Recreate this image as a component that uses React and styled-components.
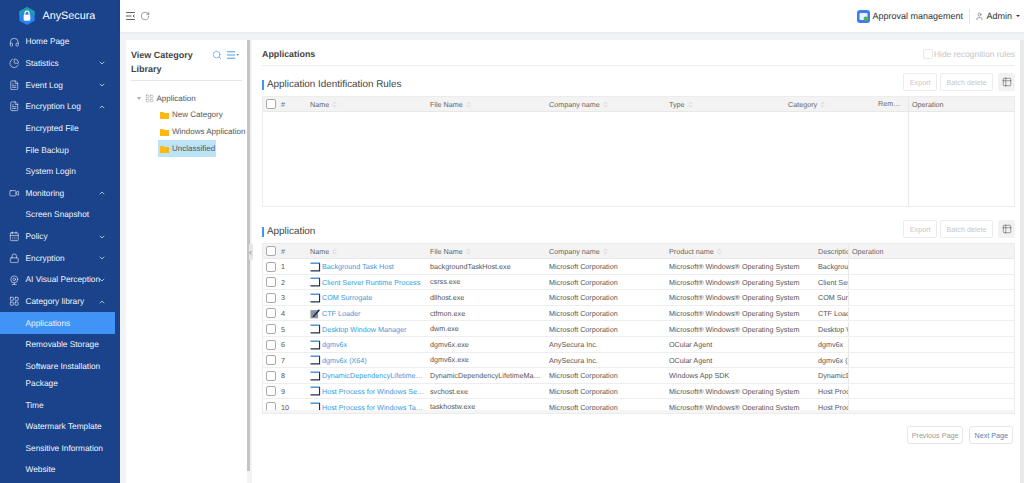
import React from 'react'
import styled, { createGlobalStyle } from 'styled-components'
import {
  Headphones, ChartPie, FileText, Video, CalendarDays, Lock, Webcam, LayoutGrid,
  ChevronDown, ChevronUp, Search, RotateCw, User, Table2, ChevronsUpDown,
} from 'lucide-react'

const MENU = [
  { label: 'Home Page', Icon: Headphones },
  { label: 'Statistics', Icon: ChartPie, arrow: 'down' },
  { label: 'Event Log', Icon: FileText, arrow: 'down' },
  { label: 'Encryption Log', Icon: FileText, arrow: 'up' },
  { label: 'Encrypted File', sub: true },
  { label: 'File Backup', sub: true },
  { label: 'System Login', sub: true },
  { label: 'Monitoring', Icon: Video, arrow: 'up' },
  { label: 'Screen Snapshot', sub: true },
  { label: 'Policy', Icon: CalendarDays, arrow: 'down' },
  { label: 'Encryption', Icon: Lock, arrow: 'down' },
  { label: 'AI Visual Perception', Icon: Webcam, arrow: 'down' },
  { label: 'Category library', Icon: LayoutGrid, arrow: 'up' },
  { label: 'Applications', sub: true, active: true },
  { label: 'Removable Storage', sub: true },
  { label: 'Software Installation Package', sub: true },
  { label: 'Time', sub: true },
  { label: 'Watermark Template', sub: true },
  { label: 'Sensitive Information', sub: true },
  { label: 'Website', sub: true },
]

const OS = 'Microsoft® Windows® Operating System'
const MS = 'Microsoft Corporation'

const APPS = [
  ['Background Task Host', 'backgroundTaskHost.exe', MS, OS, 'Background Task Host'],
  ['Client Server Runtime Process', 'csrss.exe', MS, OS, 'Client Server Runtime'],
  ['COM Surrogate', 'dllhost.exe', MS, OS, 'COM Surrogate'],
  ['CTF Loader', 'ctfmon.exe', MS, OS, 'CTF Loader'],
  ['Desktop Window Manager', 'dwm.exe', MS, OS, 'Desktop Window'],
  ['dgmv6x', 'dgmv6x.exe', 'AnySecura Inc.', 'OCular Agent', 'dgmv6x'],
  ['dgmv6x (X64)', 'dgmv6x.exe', 'AnySecura Inc.', 'OCular Agent', 'dgmv6x (X64)'],
  ['DynamicDependencyLifetimeManager', 'DynamicDependencyLifetimeManager.exe', MS, 'Windows App SDK', 'DynamicDependency'],
  ['Host Process for Windows Services', 'svchost.exe', MS, OS, 'Host Process'],
  ['Host Process for Windows Tasks', 'taskhostw.exe', MS, OS, 'Host Process'],
]

const RULE_COLS = '14px 29px 120px 119px 120px 119px 90px 34px 1fr'
const APP_COLS = '14px 29px 120px 119px 120px 149px 34px 1fr'

function Logo() {
  return (
    <svg width="18" height="18" viewBox="0 0 19 20">
      <path d="M9.5 0 18 4.8v10.4L9.5 20 1 15.2V4.8z" fill="#2a83ee" />
      <path d="M9.5 0 18 4.8v5L9.5 5 1 9.8v-5z" fill="#1fa39b" opacity=".75" />
      <rect x="5.8" y="8.6" width="7.4" height="6.6" rx="1.2" fill="#fff" />
      <path d="M7.2 9V6.9a2.3 2.3 0 0 1 4.6 0V9" fill="none" stroke="#fff" strokeWidth="1.3" />
    </svg>
  )
}

function Folder() {
  return (
    <FixedSvg width="9" height="8" viewBox="0 0 9 8">
      <path d="M0 1h3.4l.8.9H9V8H0z" fill="#fdb813" />
    </FixedSvg>
  )
}

function AppIcon({ pen }) {
  if (pen) {
    return (
      <FixedSvg width="10.5" height="11" viewBox="0 0 11 11">
        <rect x="0.5" y="2" width="8" height="8.5" fill="#8d939b" />
        <path d="M3 8 9.2 1l1.3 1.2L4.3 9.2 2.6 9.7z" fill="#1c2f63" />
      </FixedSvg>
    )
  }
  return (
    <FixedSvg width="10.5" height="10" viewBox="0 0 11 10">
      <path d="M0.5 1h10" stroke="#2f7fc4" strokeWidth="1.3" />
      <path d="M10 1v8H0.5" fill="none" stroke="#23304a" strokeWidth="1.2" />
    </FixedSvg>
  )
}

function Sort() {
  return <SortIcon size={7} strokeWidth={1.5} />
}

function RulesTable() {
  const heads = ['File Name', 'Company name', 'Type', 'Category']
  return (
    <Table>
      <HeadRow $cols={RULE_COLS}>
        <CheckCell><Check /></CheckCell>
        <Cell>#</Cell>
        <Cell>Name <Sort /></Cell>
        {heads.map(text => <Cell key={text}>{text} <Sort /></Cell>)}
        <RemarkCell>Remarks</RemarkCell>
        <OperationCell>Operation</OperationCell>
      </HeadRow>
      <EmptyBody $cols={RULE_COLS}>
        <OperationCell />
      </EmptyBody>
    </Table>
  )
}

function AppsTable() {
  return (
    <Table>
      <HeadRow $cols={APP_COLS}>
        <CheckCell><Check /></CheckCell>
        <Cell>#</Cell>
        <Cell>Name <Sort /></Cell>
        <Cell>File Name <Sort /></Cell>
        <Cell>Company name <Sort /></Cell>
        <Cell>Product name <Sort /></Cell>
        <Cell>Description</Cell>
        <OperationCell>Operation</OperationCell>
      </HeadRow>
      <Rows>
        {APPS.map(([name, file, company, product, description], index) => (
          <BodyRow key={name} $cols={APP_COLS}>
            <CheckCell><Check /></CheckCell>
            <Cell>{index + 1}</Cell>
            <NameCell>
              <AppIcon pen={name === 'CTF Loader'} />
              <AppLink>{name}</AppLink>
            </NameCell>
            <FileCell>{file}</FileCell>
            <Cell>{company}</Cell>
            <Cell>{product}</Cell>
            <Cell>{description}</Cell>
            <OperationCell />
          </BodyRow>
        ))}
      </Rows>
      <ScrollStrip />
    </Table>
  )
}

function Toolbar() {
  return (
    <Tools>
      <GhostButton>Export</GhostButton>
      <GhostButton>Batch delete</GhostButton>
      <ColumnsButton><Table2 size={10} strokeWidth={1.2} /></ColumnsButton>
    </Tools>
  )
}

export default function App() {
  return (
    <Page>
      <Global />
      <Sidebar>
        <Brand><Logo /><BrandName>AnySecura</BrandName></Brand>
        {MENU.map(({ label, Icon, arrow, sub, active }) => (
          <MenuItem key={label} $sub={sub} $active={active}>
            {Icon && <MenuIcon><Icon size={10.5} strokeWidth={1.4} /></MenuIcon>}
            <MenuLabel $sub={sub}>{label}</MenuLabel>
            {arrow === 'down' && <MenuArrow><ChevronDown size={8} strokeWidth={2} /></MenuArrow>}
            {arrow === 'up' && <MenuArrow><ChevronUp size={8} strokeWidth={2} /></MenuArrow>}
          </MenuItem>
        ))}
      </Sidebar>
      <Column>
        <Header>
          <HeaderTools>
            <svg width="9" height="8" viewBox="0 0 10 9" fill="none" stroke="#444" strokeWidth="1">
              <path d="M0 .5h10M0 4.5h6M0 8.5h10M9.5 3 7.8 4.5 9.5 6" />
            </svg>
            <RotateCw size={10} strokeWidth={1.2} color="#444" />
          </HeaderTools>
          <HeaderRight>
            <svg width="13" height="13" viewBox="0 0 13 13">
              <rect width="13" height="13" rx="3" fill="#3f7cf0" />
              <rect x="2.5" y="3" width="8" height="7" rx="1" fill="#e7f1fb" />
              <circle cx="8.8" cy="8.8" r="2.2" fill="#49b649" />
            </svg>
            <Approval>Approval management</Approval>
            <Divider />
            <User size={9} strokeWidth={1.3} color="#444" />
            <AdminName>Admin</AdminName>
            <Caret />
          </HeaderRight>
        </Header>
        <Content>
          <TreePanel>
            <TreeHead>
              <TreeTitle>View Category Library</TreeTitle>
              <TreeActions>
                <Search size={10} strokeWidth={1.5} color="#3a9ad9" />
                <svg width="12" height="8" viewBox="0 0 13 8" fill="none" stroke="#3a9ad9" strokeWidth="1">
                  <path d="M0 .5h9M0 4h9M0 7.5h9" />
                  <path d="M10.3 3h2.7L11.6 5z" fill="#3a9ad9" stroke="none" />
                </svg>
              </TreeActions>
            </TreeHead>
            <TreeRoot>
              <TreeCaret />
              <LayoutGrid size={9} strokeWidth={1} color="#777" />
              <span>Application</span>
            </TreeRoot>
            <TreeLeaf><Folder /><span>New Category</span></TreeLeaf>
            <TreeLeaf><Folder /><span>Windows Application</span></TreeLeaf>
            <TreeLeaf $selected><Folder /><span>Unclassified</span></TreeLeaf>
          </TreePanel>
          <Splitter><SplitterHandle>‹</SplitterHandle></Splitter>
          <MainPanel>
            <PanelHead>
              <PanelTitle>Applications</PanelTitle>
              <HideRules><Check $light />Hide recognition rules</HideRules>
            </PanelHead>
            <SectionBar>
              <SectionTitle>Application Identification Rules</SectionTitle>
              <Toolbar />
            </SectionBar>
            <RulesTable />
            <SectionBar $second>
              <SectionTitle>Application</SectionTitle>
              <Toolbar />
            </SectionBar>
            <AppsTable />
            <Pager>
              <PagerButton>Previous Page</PagerButton>
              <PagerButton $next>Next Page</PagerButton>
            </Pager>
          </MainPanel>
          <PageScroll />
        </Content>
      </Column>
    </Page>
  )
}

const Global = createGlobalStyle`
  html, body {
    margin: 0;
    height: 100%;
    overflow: hidden;
    font-family: "Liberation Sans", Arial, sans-serif;
    font-size: 8px;
    color: #555;
    text-rendering: geometricPrecision;
  }
  * { box-sizing: border-box; }
`

const Page = styled.div`
  display: flex;
  width: 1024px;
  height: 483px;
  overflow: hidden;
  background: #f2f3f5;
`

const Sidebar = styled.nav`
  flex: 0 0 120px;
  min-width: 0;
  padding-right: 5px;
  background: #1a438c;
  color: #f0f4fb;
  font-size: 8.3px;
`

const Brand = styled.div`
  display: flex;
  align-items: center;
  gap: 6.5px;
  height: 31px;
  padding-left: 18px;
`

const BrandName = styled.span`
  font-size: 10.8px;
  color: #fff;
`

const MenuItem = styled.div`
  display: flex;
  align-items: center;
  min-height: 21.65px;
  padding: 2.3px 9px 2.3px ${props => props.$sub ? '25.5px' : '9px'};
  line-height: 17px;
  background: ${props => props.$active ? '#3f94f5' : 'transparent'};
`

const MenuIcon = styled.span`
  display: flex;
  flex: 0 0 16.5px;
`

const MenuLabel = styled.span`
  flex: 1;
  min-width: 0;
  white-space: ${props => props.$sub ? 'normal' : 'nowrap'};
`

const MenuArrow = styled.span`
  display: flex;
  flex: 0 0 8px;
`

const Column = styled.div`
  display: flex;
  flex: 1;
  flex-direction: column;
  min-width: 0;
`

const Header = styled.header`
  display: flex;
  align-items: center;
  justify-content: space-between;
  flex: 0 0 32px;
  padding: 0 4px 0 6px;
  background: #fff;
  box-shadow: 0 1px 3px rgba(0, 0, 0, .06);
`

const HeaderTools = styled.div`
  display: flex;
  align-items: center;
  gap: 4.5px;
`

const HeaderRight = styled.div`
  display: flex;
  align-items: center;
  font-size: 9px;
  color: #333;
`

const Approval = styled.span`
  margin-left: 2px;
`

const Divider = styled.span`
  width: 1px;
  height: 15px;
  margin: 0 5.5px 0 6px;
  background: #e4e4e4;
`

const AdminName = styled.span`
  margin-left: 2px;
`

const Caret = styled.span`
  width: 0;
  height: 0;
  margin-left: 4px;
  border: 2px solid transparent;
  border-top: 2.5px solid #333;
  border-bottom: 0;
`

const Content = styled.div`
  display: flex;
  flex: 1;
  min-height: 0;
  padding: 8px 0 0 6px;
`

const TreePanel = styled.aside`
  flex: 0 0 121px;
  min-width: 0;
  padding: 0 5px;
  background: #fff;
  color: #555;
`

const TreeHead = styled.div`
  display: flex;
  justify-content: space-between;
  height: 41px;
  padding-top: 8px;
  margin-bottom: 8px;
  border-bottom: 1px solid #e6e6e6;
`

const TreeTitle = styled.div`
  width: 76px;
  font-size: 9px;
  font-weight: 700;
  line-height: 14px;
  color: #444;
`

const TreeActions = styled.div`
  display: flex;
  align-items: center;
  align-self: flex-start;
  gap: 5px;
  height: 14px;
  margin-right: 3px;
`

const TreeRoot = styled.div`
  display: flex;
  align-items: center;
  gap: 2.5px;
  height: 17px;
  padding: 1px 0 0 6px;
`

const TreeCaret = styled.span`
  width: 0;
  height: 0;
  margin-right: 1.5px;
  border: 2.5px solid transparent;
  border-top: 3px solid #aaa;
  border-bottom: 0;
`

const TreeLeaf = styled.div`
  display: flex;
  align-items: center;
  gap: 3px;
  width: ${props => props.$selected ? '58px' : 'auto'};
  height: 17px;
  margin-left: 27px;
  padding: 0.5px 0 0 2px;
  white-space: nowrap;
  background: ${props => props.$selected ? '#bde3f6' : 'transparent'};
`

const FixedSvg = styled.svg`
  flex: none;
`

const Splitter = styled.div`
  position: relative;
  flex: 0 0 5px;
  border-left: 3.5px solid #c4c4c4;
  margin-bottom: 12px;
`

const SplitterHandle = styled.span`
  position: absolute;
  top: 204px;
  left: -1px;
  width: 4px;
  height: 16px;
  font-size: 9px;
  line-height: 16px;
  color: #888;
  background: #e6e6e6;
`

const MainPanel = styled.main`
  flex: 0 0 768px;
  min-width: 0;
  padding: 0 5px 0 10px;
  background: #fff;
`

const PageScroll = styled.div`
  flex: 1;
  background: #e9e9e9;
`

const PanelHead = styled.div`
  display: flex;
  align-items: center;
  justify-content: space-between;
  height: 26px;
  padding-top: 3px;
  border-bottom: 1px solid #ececec;
`

const PanelTitle = styled.div`
  font-size: 8.9px;
  font-weight: 700;
  color: #444;
`

const HideRules = styled.label`
  display: flex;
  align-items: center;
  gap: 1px;
  font-size: 8.4px;
  color: #c6c6c6;
`

const SectionBar = styled.div`
  display: flex;
  align-items: center;
  justify-content: space-between;
  height: 18px;
  margin: ${props => props.$second ? '13px' : '7px'} 0 5px;
`

const SectionTitle = styled.div`
  margin-top: 6.5px;
  padding-left: 3px;
  font-size: 9.9px;
  line-height: 10px;
  color: #444;
  border-left: 2.5px solid #3f94f5;
`

const Tools = styled.div`
  display: flex;
  align-items: center;
  gap: 3px;
`

const GhostButton = styled.button`
  height: 18px;
  padding: 0 5.5px;
  font: inherit;
  font-size: 7.2px;
  color: #c8c8c8;
  background: #fff;
  border: 1px solid #ececec;
  border-radius: 2px;
`

const ColumnsButton = styled.span`
  display: flex;
  align-items: center;
  justify-content: center;
  width: 17px;
  height: 18px;
  margin-left: 2px;
  color: #444;
  background: #f2f2f2;
  border-radius: 2px;
`

const Table = styled.div`
  border: 1px solid #ececec;
  overflow: hidden;
`

const Row = styled.div`
  display: grid;
  grid-template-columns: ${props => props.$cols};
  align-items: stretch;
`

const HeadRow = styled(Row)`
  height: 15px;
  background: #f3f3f3;
  border-bottom: 1px solid #e8e8e8;
  color: #666;
  font-size: 7.2px;
`

const BodyRow = styled(Row)`
  height: 15.6px;
  padding-top: 0.8px;
  border-bottom: 1px solid #eeeeee;
  font-size: 7.2px;
`

const EmptyBody = styled(Row)`
  height: 94px;
  & > * { grid-column: -2; }
`

const Rows = styled.div`
  height: 151px;
  overflow: hidden;
`

const ScrollStrip = styled.div`
  height: 3px;
  background: #f5f5f5;
`

const Cell = styled.div`
  display: flex;
  align-items: center;
  gap: 2px;
  min-width: 0;
  padding-left: 4px;
  overflow: hidden;
  white-space: nowrap;
`

const FileCell = styled(Cell)`
  display: block;
  padding-right: 3px;
  line-height: 14px;
  text-overflow: ellipsis;
`

const RemarkCell = styled(FileCell)`
  padding-right: 5px;
  line-height: 14px;
`

const CheckCell = styled(Cell)`
  padding-left: 2.5px;
`

const NameCell = styled(Cell)`
  gap: 1.5px;
`

const OperationCell = styled(Cell)`
  padding-left: 3px;
  border-left: 1px solid #e8e8e8;
`

const AppLink = styled.a`
  flex: 1;
  min-width: 0;
  overflow: hidden;
  color: #3a9ad9;
  text-overflow: ellipsis;
`

const Check = styled.span`
  display: inline-block;
  flex: none;
  width: 10px;
  height: 10px;
  background: #fff;
  border: 1px solid ${props => props.$light ? '#e8e8e8' : '#aaa'};
  border-radius: 2px;
`

const SortIcon = styled(ChevronsUpDown)`
  flex: none;
  color: #aaa;
`

const Pager = styled.div`
  display: flex;
  justify-content: flex-end;
  gap: 6px;
  margin: 12px 2px 0 0;
`

const PagerButton = styled.button`
  height: 18px;
  padding: 0 4px;
  font: inherit;
  font-size: 7.2px;
  color: ${props => props.$next ? '#5584b4' : '#999'};
  background: #fff;
  border: 1px solid #e6e6e6;
  border-radius: 3px;
`
